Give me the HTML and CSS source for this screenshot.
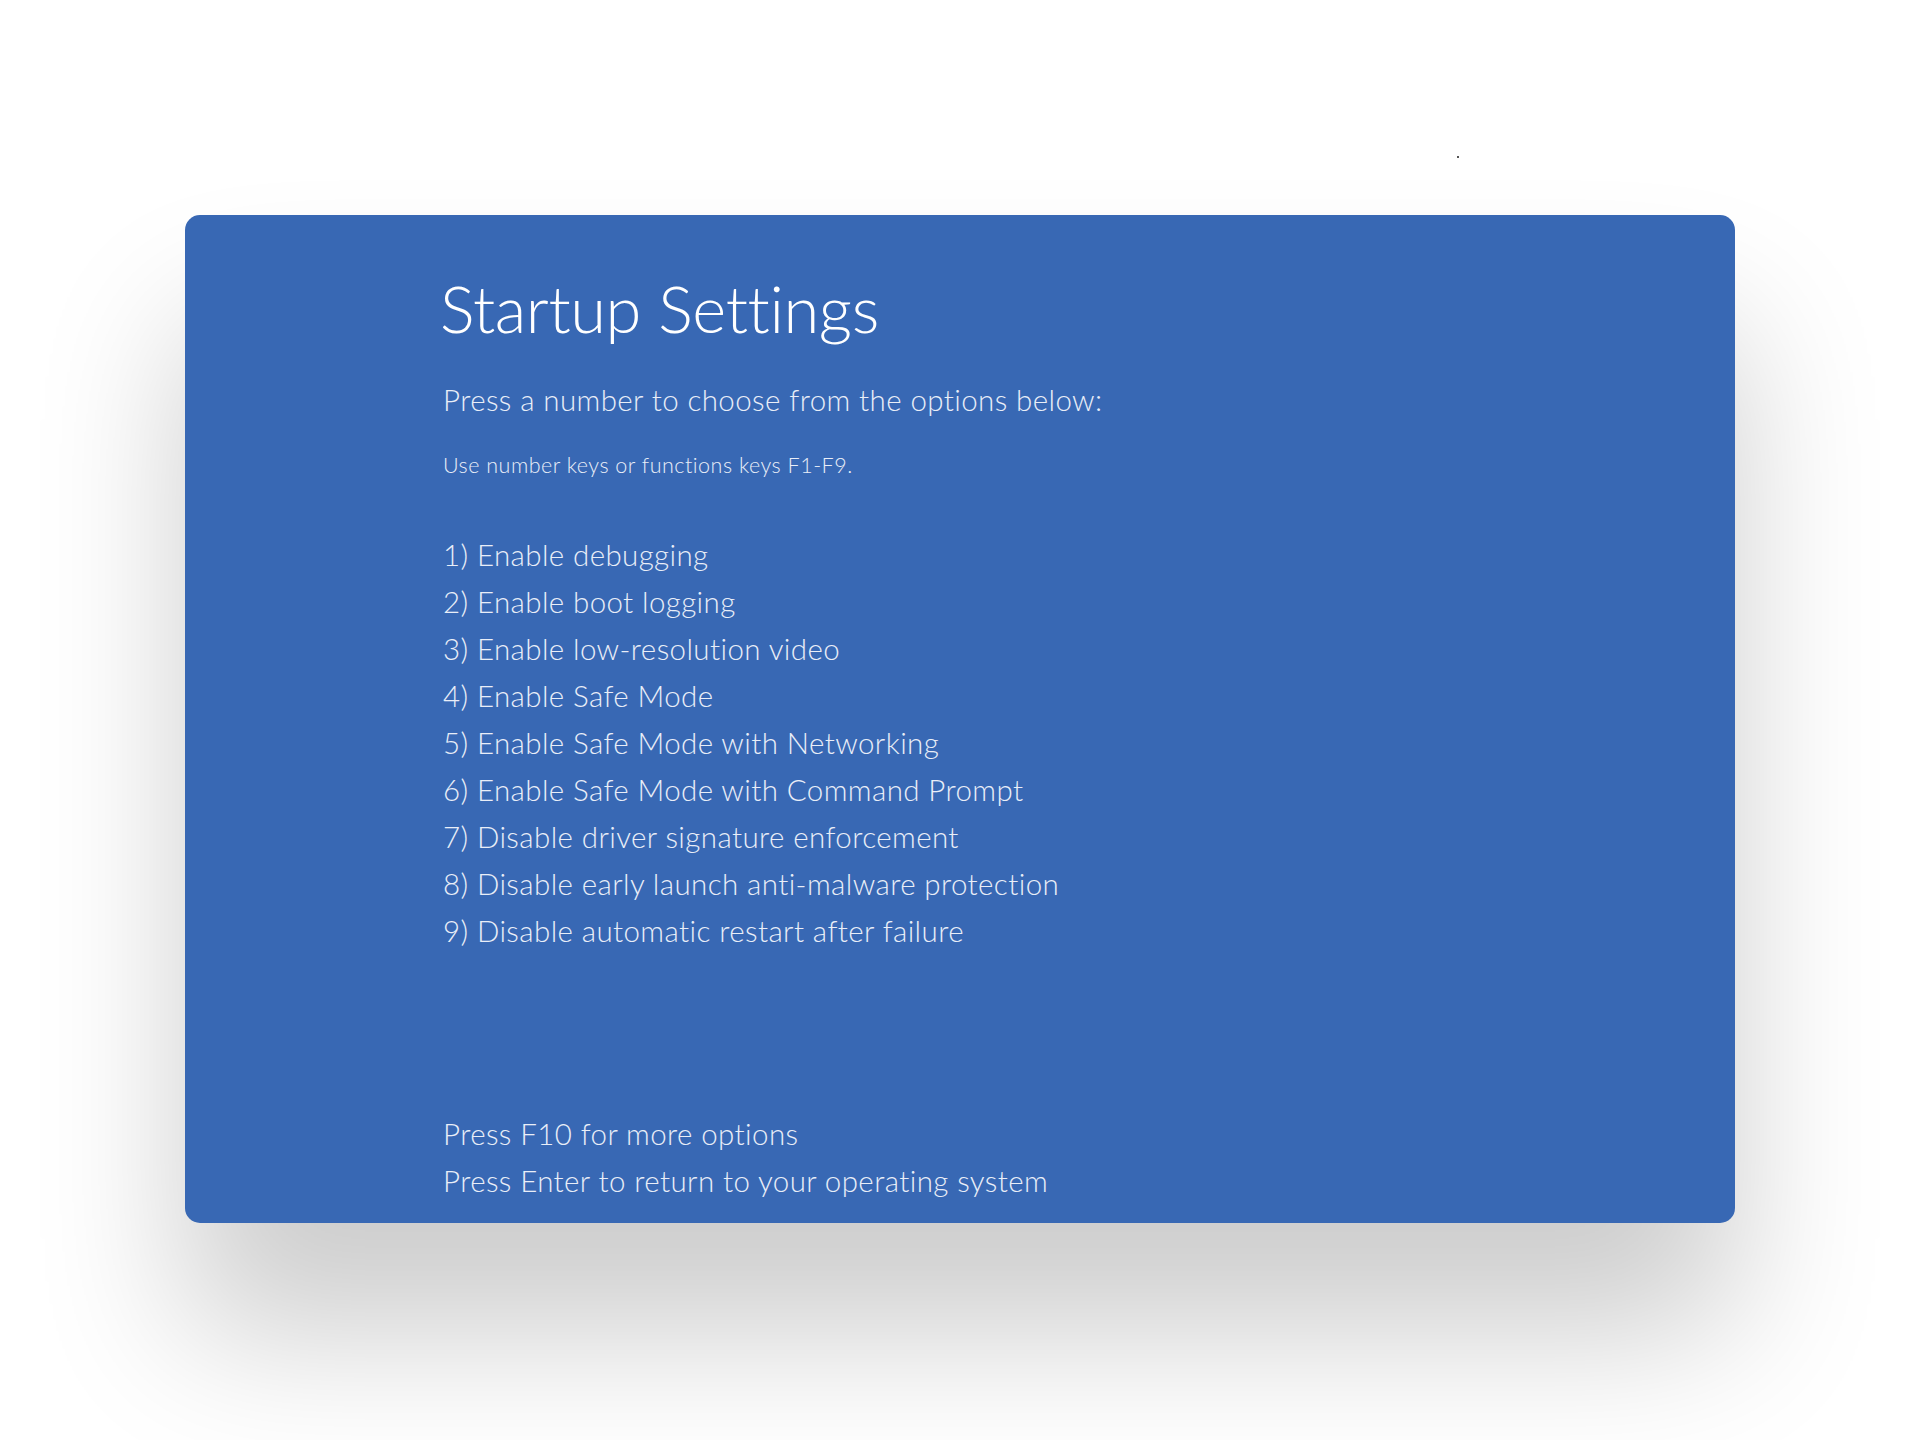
FILE: index.html
```html
<!DOCTYPE html>
<html lang="en">
<head>
<meta charset="utf-8">
<title>Startup Settings</title>
<link rel="stylesheet" href="styles.css">
</head>
<body>
<span class="speck"></span>
<main class="screen">
  <h1 class="title">Startup Settings</h1>
  <p class="lead">Press a number to choose from the options below:</p>
  <p class="hint">Use number keys or functions keys F1-F9.</p>
  <ol class="options">
    <li>1) Enable debugging</li>
    <li>2) Enable boot logging</li>
    <li>3) Enable low-resolution video</li>
    <li>4) Enable Safe Mode</li>
    <li>5) Enable Safe Mode with Networking</li>
    <li>6) Enable Safe Mode with Command Prompt</li>
    <li>7) Disable driver signature enforcement</li>
    <li>8) Disable early launch anti-malware protection</li>
    <li>9) Disable automatic restart after failure</li>
  </ol>
  <div class="footer">
    <p>Press F10 for more options</p>
    <p>Press Enter to return to your operating system</p>
  </div>
</main>
</body>
</html>
```
FILE: styles.css
```css
html, body {
  margin: 0;
  padding: 0;
  background: #ffffff;
  height: 1440px;
  overflow: hidden;
}
body {
  position: relative;
  font-family: "Lato", "Open Sans", sans-serif;
  font-weight: 300;
  font-variant-ligatures: none;
  font-feature-settings: "liga" 0, "clig" 0;
}
.speck {
  position: absolute;
  left: 1457px;
  top: 156px;
  width: 2px;
  height: 2px;
  background: #555;
}
.screen {
  box-sizing: border-box;
  margin: 215px 0 0 185px;
  width: 1550px;
  height: 1008px;
  padding: 52px 0 0 255px;
  background: #3868b4;
  border-radius: 15px;
  color: #e9eef8;
  box-shadow: 0 110px 150px rgba(0, 0, 0, 0.2);
}
.title {
  margin: 0;
  font-size: 65px;
  line-height: 82px;
  font-weight: 300;
  letter-spacing: -0.4px;
  color: #ffffff;
}
.lead {
  margin: 31px 0 0 3px;
  font-size: 29.5px;
  line-height: 40px;
  letter-spacing: 0.4px;
}
.hint {
  margin: 31px 0 0 3px;
  font-size: 21.5px;
  line-height: 28px;
  letter-spacing: 0.5px;
}
.options {
  list-style: none;
  margin: 52px 0 0 3px;
  padding: 0;
  font-size: 29.5px;
  line-height: 47px;
  letter-spacing: 0.4px;
}
.footer {
  margin: 156px 0 0 3px;
  font-size: 29.5px;
  line-height: 47px;
  letter-spacing: 0.4px;
}
.footer p {
  margin: 0;
}
```
